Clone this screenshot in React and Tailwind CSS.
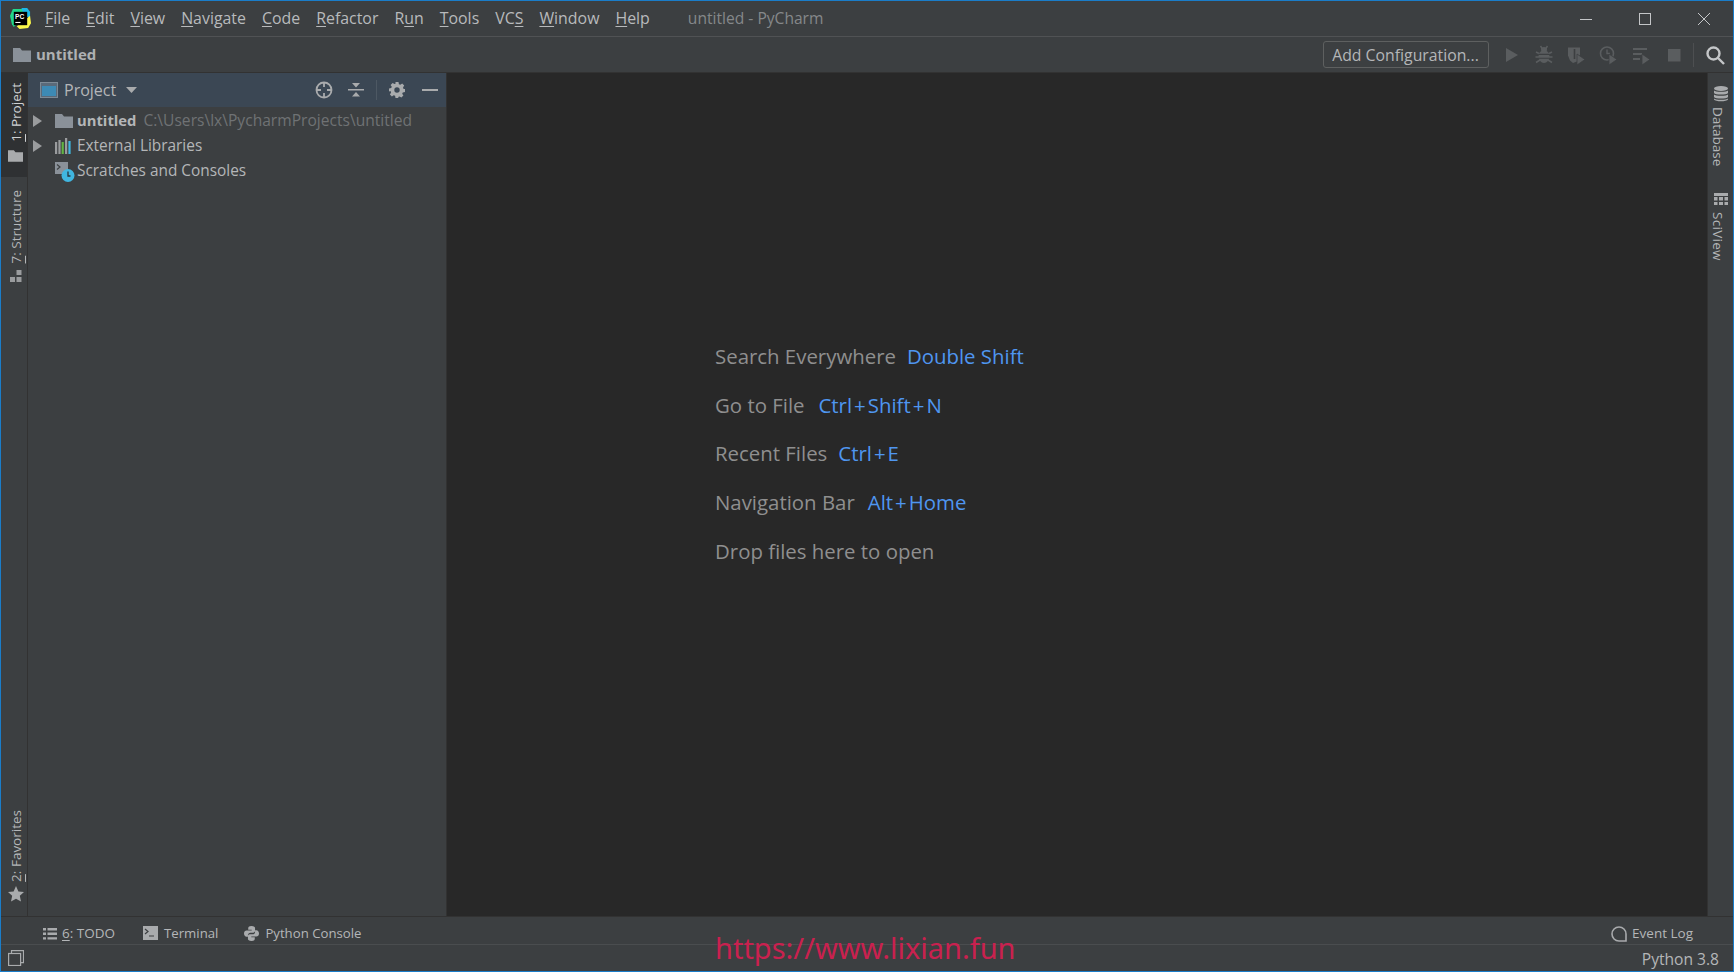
import React from "react";

const M = ({ k, rest, pre = "" }) => (
  <span className="whitespace-nowrap">
    {pre}
    <span className="underline underline-offset-2 decoration-1">{k}</span>
    {rest}
  </span>
);

const Folder = ({ className }) => (
  <svg viewBox="0 0 18 14" className={className}>
    <path d="M0 0h7l2 2.5h9V14H0z" fill="currentColor" />
  </svg>
);

const Logo = () => (
  <svg viewBox="0 0 22 22" className="w-[21px] h-[21px]">
    <path d="M3 1h11l3 3-5 8-8 8-2-3L0 8z" fill="#21d789" />
    <path d="M12 0h6l3 4 0 6-6-1z" fill="#1cb6e6" />
    <path d="M21 8l1 8-3 5-9 1-3-3 8-6z" fill="#fcf84a" />
    <rect x="4" y="4" width="14" height="14" fill="#000" />
    <text x="5.2" y="11" fontSize="7" fontWeight="700" fill="#fff" fontFamily="Liberation Sans">PC</text>
    <rect x="5.6" y="14.6" width="5.4" height="1.1" fill="#fff" />
  </svg>
);

const ToolIcon = ({ children, className = "" }) => (
  <svg viewBox="0 0 20 20" className={`w-5 h-5 ${className}`} fill="#5a5d5f">{children}</svg>
);

const Play = () => <path d="M10 9l8 5.5-8 5.5z" fill="#5a5d5f" stroke="#3c3f41" strokeWidth=".8" />;

const Key = ({ children }) => <span className="text-[#4f96f0] text-[20.4px]">{children}</span>;
const Plus = () => <span className="mx-[2px]">+</span>;

export default function App() {
  return (
    <div className="w-[1734px] h-[972px] flex flex-col overflow-hidden relative border border-[#1a7dc9] bg-[#3c3f41] text-[#b4b6b8] font-['Open_Sans','Noto_Sans',sans-serif]">
      {/* title bar */}
      <div className="h-[36px] shrink-0 flex items-center border-b border-[#505254] bg-[#3c3f41]">
        <div className="w-[44px] pl-[9px] flex items-center"><Logo /></div>
        <nav className="flex items-center text-[15.9px] gap-[16px] text-[#b8babc]">
          <M k="F" rest="ile" />
          <M k="E" rest="dit" />
          <M k="V" rest="iew" />
          <M k="N" rest="avigate" />
          <M k="C" rest="ode" />
          <M k="R" rest="efactor" />
          <M pre="R" k="u" rest="n" />
          <M k="T" rest="ools" />
          <M pre="VC" k="S" rest="" />
          <M k="W" rest="indow" />
          <M k="H" rest="elp" />
        </nav>
        <span className="ml-[38px] text-[15.6px] text-[#85888a]">untitled - PyCharm</span>
        <div className="ml-auto flex items-center text-[#c4c6c8]">
          <svg viewBox="0 0 12 12" className="w-3 h-3 mr-[47px]"><path d="M0 6.5h12" stroke="currentColor" strokeWidth="1" /></svg>
          <svg viewBox="0 0 12 12" className="w-3 h-3 mr-[47px]"><rect x=".5" y=".5" width="11" height="11" fill="none" stroke="currentColor" /></svg>
          <svg viewBox="0 0 12 12" className="w-3 h-3 mr-[23px]"><path d="M0 0l12 12M12 0L0 12" stroke="currentColor" strokeWidth="1" /></svg>
        </div>
      </div>

      {/* nav / run toolbar */}
      <div className="h-[36px] shrink-0 flex items-center border-b border-[#323232] pl-[12px]">
        <Folder className="w-[18px] h-[14px] text-[#8a9199]" />
        <span className="ml-[5px] text-[15px] font-bold text-[#afb1b3]">untitled</span>
        <div className="ml-auto flex items-center">
          <div className="w-[166px] h-[27px] pt-[2px] rounded-[3px] border border-[#5e6060] flex items-center justify-center text-[15.8px] text-[#b4b6b8] whitespace-nowrap">
            Add Configuration...
          </div>
          <div className="flex items-center gap-[12.5px] ml-[13px]">
            <ToolIcon><path d="M4 3l12 7-12 7z" /></ToolIcon>
            <ToolIcon>
              <ellipse cx="10" cy="11.5" rx="5.5" ry="6.5" />
              <ellipse cx="10" cy="4.5" rx="3" ry="2.5" />
              <path d="M6.5 1l2 3M13.5 1l-2 3M2 7l4 2M18 7l-4 2M1.5 12h4M18.5 12h-4M2 17.5l4-2.5M18 17.5L14 15" stroke="#5a5d5f" strokeWidth="1.5" fill="none" />
              <path d="M4.5 9.4h11M4.5 13.2h11" stroke="#3c3f41" strokeWidth="1.1" />
            </ToolIcon>
            <ToolIcon>
              <path d="M1 2.5h12v7l-3 7-4 1.5-3-2.5-2-5z" />
              <path d="M7.5 4v10" stroke="#3c3f41" strokeWidth="1.6" />
              <Play />
            </ToolIcon>
            <ToolIcon>
              <circle cx="8" cy="8.5" r="6.5" fill="none" stroke="#5a5d5f" strokeWidth="1.6" />
              <path d="M8 4.5v4h3" fill="none" stroke="#5a5d5f" strokeWidth="1.4" />
              <Play />
            </ToolIcon>
            <ToolIcon>
              <path d="M1 3h14v2H1zM1 8h9v2H1zM1 13h7v2H1z" />
              <Play />
            </ToolIcon>
            <ToolIcon><rect x="4" y="4" width="12.5" height="12.5" /></ToolIcon>
          </div>
          <div className="w-px h-[24px] bg-[#4d4f51] ml-[9px]" />
          <svg viewBox="0 0 20 20" className="w-5 h-5 ml-[11px] mr-[8px]" fill="none" stroke="#c4c6c8" strokeWidth="2.4">
            <circle cx="8.5" cy="8.5" r="6" />
            <path d="M13 13l6 6" />
          </svg>
        </div>
      </div>

      {/* middle */}
      <div className="flex-1 min-h-0 flex border-b border-[#323232]">
        {/* left stripe */}
        <div className="w-[27px] shrink-0 flex flex-col items-center border-r border-[#323232] text-[13.5px] pl-[3px]">
          <div className="w-[26px] -ml-[3px] pl-[3px] h-[104px] shrink-0 bg-[#2f3133] flex flex-col items-center pt-[10px] text-[#cfd1d3]">
            <span className="[writing-mode:vertical-rl] rotate-180 whitespace-nowrap ml-[1px]">
              <span className="underline underline-offset-2 decoration-1">1</span>: Project
            </span>
            <Folder className="w-[15px] h-[12px] mt-[8px] text-[#a9abad] shrink-0" />
          </div>
          <div className="flex flex-col items-center pt-[13px]">
            <span className="[writing-mode:vertical-rl] rotate-180 whitespace-nowrap ml-[1px]">
              <span className="underline underline-offset-2 decoration-1">7</span>: Structure
            </span>
            <svg viewBox="0 0 14 12" className="w-[14px] h-[12px] mt-[7px]" fill="#9a9c9e">
              <rect x="7.5" y="0" width="5" height="5" />
              <rect x="1" y="7" width="5" height="5" />
              <rect x="7.5" y="7" width="5" height="5" />
            </svg>
          </div>
          <div className="mt-auto flex flex-col items-center pb-[14px]">
            <span className="[writing-mode:vertical-rl] rotate-180 whitespace-nowrap ml-[1px]">
              <span className="underline underline-offset-2 decoration-1">2</span>: Favorites
            </span>
            <svg viewBox="0 0 16 16" className="w-4 h-4 mt-[4px]" fill="#a9abad">
              <path d="M8 0l2.4 5.4 5.6.6-4.2 3.8 1.2 5.7L8 12.7l-5 2.8 1.2-5.7L0 6l5.6-.6z" />
            </svg>
          </div>
        </div>

        {/* project panel */}
        <aside className="w-[419px] shrink-0 flex flex-col border-r border-[#323232]">
          <div className="h-[34px] shrink-0 bg-[#3b4754] flex items-center pl-[12px]">
            <svg viewBox="0 0 18 16" className="w-[18px] h-[16px]">
              <rect x=".5" y=".5" width="17" height="15" fill="#5a6a7a" stroke="#7d8a96" />
              <rect x="2" y="4" width="14" height="10" fill="#3d8ab5" />
            </svg>
            <span className="ml-[6px] text-[16px] text-[#b4b6b8]">Project</span>
            <svg viewBox="0 0 11 6" className="w-[11px] h-[6px] ml-[10px]"><path d="M0 0h11L5.5 6z" fill="#a9abad" /></svg>
            <div className="ml-auto flex items-center text-[#a9abad]">
              <svg viewBox="0 0 18 18" className="w-[18px] h-[18px]" fill="none" stroke="currentColor" strokeWidth="1.8">
                <circle cx="9" cy="9" r="7.5" />
                <path d="M9 1v5M9 12v5M1 9h5M12 9h5" />
              </svg>
              <svg viewBox="0 0 16 16" className="w-4 h-4 ml-[15px]" fill="currentColor">
                <path d="M0 7h16v1.6H0zM4 1h8L8 5.5zM8 10l4 4.5H4z" />
              </svg>
              <div className="w-px h-[20px] bg-[#4d5863] ml-[12px]" />
              <svg viewBox="0 0 16 16" className="w-4 h-4 ml-[12px]" fill="currentColor">
                <path fillRule="evenodd" d="M6.5 0h3l.4 2.2 1.4.6L13.2 1.6l2 2-1.2 1.9.6 1.4L16 7v3l-2.2.4-.6 1.4 1.2 1.8-2 2-1.9-1.2-1.4.6L9.5 16h-3l-.4-2.2-1.4-.6-1.8 1.2-2-2 1.2-1.9-.6-1.4L0 9.5v-3l2.2-.4.6-1.4L1.6 2.9l2-2 1.9 1.2 1-.4zM8 5.3a2.7 2.7 0 100 5.4 2.7 2.7 0 000-5.4z" />
              </svg>
              <svg viewBox="0 0 16 4" className="w-4 h-1 ml-[17px] mr-[8px]"><rect width="16" height="2" y="1" fill="currentColor" /></svg>
            </div>
          </div>
          <div className="flex flex-col pt-[1px] text-[15.4px]">
            <div className="h-[25px] flex items-center pl-[5px]">
              <svg viewBox="0 0 9 12" className="w-[9px] h-[12px]"><path d="M0 0l9 6-9 6z" fill="#9a9c9e" /></svg>
              <Folder className="w-[18px] h-[14px] ml-[13px] text-[#8a9199]" />
              <span className="ml-[4px] font-bold text-[14.8px] text-[#b4b6b8]">untitled</span>
              <span className="ml-[7px] text-[15.6px] text-[#6f7274] whitespace-nowrap">C:\Users\lx\PycharmProjects\untitled</span>
            </div>
            <div className="h-[25px] flex items-center pl-[5px]">
              <svg viewBox="0 0 9 12" className="w-[9px] h-[12px]"><path d="M0 0l9 6-9 6z" fill="#9a9c9e" /></svg>
              <svg viewBox="0 0 18 16" className="w-[18px] h-[16px] ml-[13px]">
                <rect x="0" y="4" width="2.2" height="12" fill="#9a9c9e" />
                <rect x="3.4" y="2" width="2.2" height="14" fill="#9a9c9e" />
                <rect x="6.6" y="4" width="2.2" height="12" fill="#62b543" />
                <rect x="10" y="0" width="2.2" height="16" fill="#9a9c9e" />
                <rect x="13.4" y="3" width="2.2" height="13" fill="#40b6e0" />
              </svg>
              <span className="ml-[4px]">External Libraries</span>
            </div>
            <div className="h-[25px] flex items-center pl-[27px]">
              <svg viewBox="0 0 20 20" className="w-[20px] h-[20px] mt-[2px]">
                <rect x="0" y="0" width="13" height="12" fill="#8a9199" />
                <path d="M2 2.5l3 2.5-3 2.5" fill="none" stroke="#3c3f41" strokeWidth="1.2" />
                <circle cx="13" cy="13.5" r="6.5" fill="#40b6e0" />
                <path d="M13 9.5v4.5h2.5" fill="none" stroke="#27363f" strokeWidth="1.3" />
              </svg>
              <span className="ml-[2px]">Scratches and Consoles</span>
            </div>
          </div>
        </aside>

        {/* editor */}
        <main className="flex-1 min-w-0 bg-[#282828] flex flex-col pt-[268px] pl-[268px] text-[20.4px] text-[#8f8f8f] gap-[18.8px]">
          <div className="h-[30px] flex items-center gap-[11px]"><span>Search Everywhere</span><Key>Double Shift</Key></div>
          <div className="h-[30px] flex items-center gap-[14px]"><span>Go to File</span><Key>Ctrl<Plus />Shift<Plus />N</Key></div>
          <div className="h-[30px] flex items-center gap-[11px]"><span>Recent Files</span><Key>Ctrl<Plus />E</Key></div>
          <div className="h-[30px] flex items-center gap-[13px]"><span>Navigation Bar</span><Key>Alt<Plus />Home</Key></div>
          <div className="h-[30px] flex items-center"><span>Drop files here to open</span></div>
        </main>

        {/* right stripe */}
        <div className="w-[26px] shrink-0 flex flex-col items-center border-l border-[#323232] text-[13.5px] pt-[13px]">
          <svg viewBox="0 0 14 16" className="w-[14px] h-[16px]" fill="#a9abad">
            <ellipse cx="7" cy="2.5" rx="7" ry="2.5" />
            <path d="M0 4.5c1 1.8 13 1.8 14 0v2.5c-1 2-13 2-14 0zM0 8.5c1 1.8 13 1.8 14 0V11c-1 2-13 2-14 0zM0 12.5c1 1.8 13 1.8 14 0v1c-1 2.4-13 2.4-14 0z" />
          </svg>
          <span className="[writing-mode:vertical-rl] whitespace-nowrap mt-[5px] mr-[5px]">Database</span>
          <svg viewBox="0 0 14 12" className="w-[14px] h-[12px] mt-[27px]" fill="#a9abad">
            <path d="M0 0h14v3H0zM0 4h3.5v3.5H0zM5 4h4v3.5H5zM10.5 4H14v3.5h-3.5zM0 9h3.5v3H0zM5 9h4v3H5zM10.5 9H14v3h-3.5z" />
          </svg>
          <span className="[writing-mode:vertical-rl] whitespace-nowrap mt-[7px] mr-[5px] tracking-[0.3px]">SciView</span>
        </div>
      </div>

      {/* bottom tool bar */}
      <div className="h-[28px] shrink-0 flex items-center border-b border-[#4a4d4f] text-[13.2px] pt-[6px]">
        <div className="flex items-center ml-[42px]">
          <svg viewBox="0 0 14 12" className="w-[14px] h-[12px]" fill="#a9abad">
            <path d="M0 0h3v2.4H0zM4.5 0H14v2.4H4.5zM0 4.6h3V7H0zM4.5 4.6H14V7H4.5zM0 9.2h3v2.4H0zM4.5 9.2H14v2.4H4.5z" />
          </svg>
          <span className="ml-[5px] text-[13.5px]"><span className="underline underline-offset-2 decoration-1">6</span>: TODO</span>
        </div>
        <div className="flex items-center ml-[28px]">
          <svg viewBox="0 0 15 14" className="w-[15px] h-[14px]">
            <rect width="15" height="14" fill="#a9abad" />
            <path d="M2 3l3 2.5L2 8M6 10h5" fill="none" stroke="#3c3f41" strokeWidth="1.2" />
          </svg>
          <span className="ml-[6px]">Terminal</span>
        </div>
        <div className="flex items-center ml-[26px]">
          <svg viewBox="0 0 16 16" className="w-[15px] h-[15px]" fill="#a9abad">
            <path d="M8 0C5 0 4.5 1.2 4.5 2.4V4H8.2v.8H2.8C1.2 4.8 0 6 0 8s1.2 3.4 2.8 3.4h1.4V9.6c0-1.4 1.2-2.5 2.6-2.5h3c1.2 0 2-.9 2-2V2.4C11.8 1 10.6 0 8 0z" />
            <path d="M8 16c3 0 3.5-1.2 3.5-2.4V12H7.8v-.8h5.4c1.6 0 2.8-1.2 2.8-3.2s-1.2-3.4-2.8-3.4h-1.4v1.8c0 1.4-1.2 2.5-2.6 2.5h-3c-1.2 0-2 .9-2 2v2.7C4.2 15 5.4 16 8 16z" />
          </svg>
          <span className="ml-[6px]">Python Console</span>
        </div>
        <div className="ml-auto flex items-center mr-[40px]">
          <svg viewBox="0 0 16 16" className="w-4 h-4" fill="none" stroke="#a9abad" strokeWidth="1.6">
            <path d="M8 1a7 7 0 017 7v7H8A7 7 0 018 1z" />
          </svg>
          <span className="ml-[5px] text-[13.5px]">Event Log</span>
        </div>
      </div>

      {/* status bar */}
      <div className="h-[26px] shrink-0 flex items-center">
        <svg viewBox="0 0 16 16" className="w-4 h-4 ml-[7px]" fill="none" stroke="#a9abad" strokeWidth="1.2">
          <path d="M3.5 3.5V.6h12v12h-3" />
          <rect x=".6" y="3.5" width="12" height="12" />
        </svg>
        <span className="ml-auto mr-[14px] pt-[3px] text-[15.6px]">Python 3.8</span>
      </div>

      {/* watermark */}
      <span className="absolute left-[714px] top-[927px] text-[29px] leading-[40px] text-[#c9214f] font-['Noto_Sans',sans-serif] whitespace-nowrap">
        https://www.lixian.fun
      </span>
    </div>
  );
}
